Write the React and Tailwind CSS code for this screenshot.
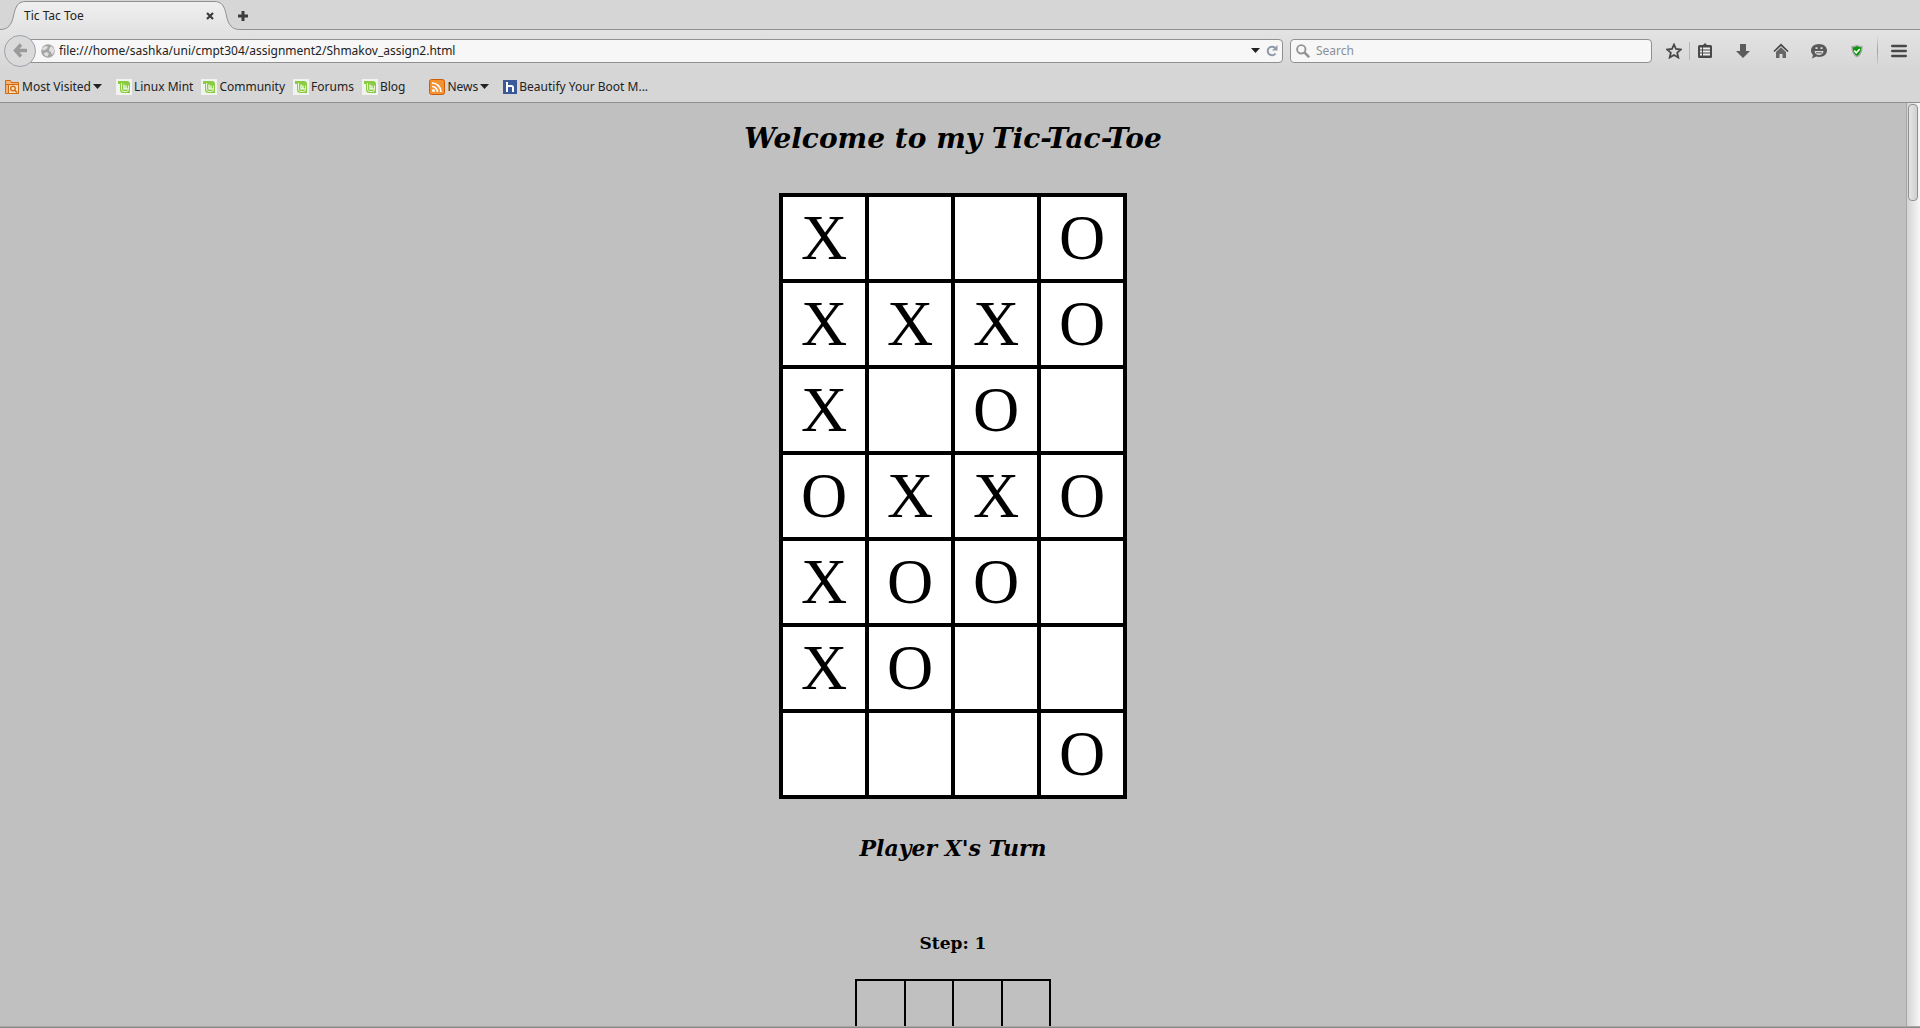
const board = [
  ["X", "", "", "O"],
  ["X", "X", "X", "O"],
  ["X", "", "O", ""],
  ["O", "X", "X", "O"],
  ["X", "O", "O", ""],
  ["X", "O", "", ""],
  ["", "", "", "O"],
];

const stepBoard = Array.from({ length: 7 }, () => ["", "", "", ""]);

function Caret() {
  return (
    <svg className="h-[5px] w-[9px]" viewBox="0 0 9 5" aria-hidden="true">
      <path d="M0 0h9L4.5 5z" fill="#222" />
    </svg>
  );
}

function FolderIcon() {
  return (
    <svg className="size-4" viewBox="0 0 16 16" fill="none" aria-hidden="true">
      <path d="M1.5 14.500V1.500h5l1 2h7v11z" fill="#f3b273" stroke="#cf6a12" />
      <path d="M1 5.500h14" stroke="#cf6a12" />
      <path d="M4.500 5.500H14.500V14.500H4.500z" fill="#fbdcb8" stroke="#cf6a12" />
      <circle cx="9" cy="9.500" r="2.300" fill="#fbdcb8" stroke="#cf6a12" strokeWidth="1.300" />
      <path d="M10.800 11.300l2.200 2.200" stroke="#cf6a12" strokeWidth="1.500" />
    </svg>
  );
}

function MintIcon() {
  return (
    <svg className="size-4" viewBox="0 0 16 16" fill="none" aria-hidden="true">
      <path d="M0 0h16v16H0z" fill="#f1f3ee" />
      <path d="M2 2h9a3 3 0 0 1 3 3v9H7.500A3.500 3.500 0 0 1 4 10.500V5H2z" fill="#8acb42" />
      <path d="M5.500 4v6a2.500 2.500 0 0 0 2.500 2.500h2.500a2 2 0 0 0 2-2V6.500" stroke="#e6f5d4" />
      <path d="M8 5.500v4.500h4M10 6.500V10" stroke="#fff" strokeWidth="1.200" />
    </svg>
  );
}

function FeedIcon() {
  return (
    <svg className="size-4" viewBox="0 0 16 16" fill="none" aria-hidden="true">
      <rect x=".5" y=".5" width="15" height="15" rx="2" fill="#f6912f" stroke="#cb5c08" />
      <circle cx="4.500" cy="11.500" r="1.500" fill="#fff" />
      <path d="M3 7.500a5.500 5.500 0 0 1 5.500 5.500M3 4a9 9 0 0 1 9 9" stroke="#fff" strokeWidth="1.700" />
    </svg>
  );
}

function HowtoIcon() {
  return (
    <svg className="size-[14px]" viewBox="0 0 14 14" fill="none" aria-hidden="true">
      <path d="M0 0h14v14H0z" fill="#3b5998" />
      <path d="M4 2v10M4 7.500q0-1.500 1.500-1.500h3Q10 6 10 7.500V12" stroke="#fff" strokeWidth="2" />
    </svg>
  );
}

const bookmarks = [
  { label: "Most Visited", Icon: FolderIcon, menu: true, space: "mr-3.5" },
  { label: "Linux Mint", Icon: MintIcon, space: "mr-2" },
  { label: "Community", Icon: MintIcon, space: "mr-2" },
  { label: "Forums", Icon: MintIcon, space: "mr-2" },
  { label: "Blog", Icon: MintIcon, space: "mr-6" },
  { label: "News", Icon: FeedIcon, menu: true, space: "mr-3.5" },
  { label: "Beautify Your Boot M...", Icon: HowtoIcon, space: "" },
];

function TabStrip() {
  return (
    <div className="flex h-[29px] items-end bg-[#d6d6d6]">
      <div className="relative h-[29px] w-[240px]">
        <svg className="absolute top-0 left-0 h-[30px] w-[240px]" viewBox="0 0 240 30" aria-hidden="true">
          <defs>
            <linearGradient id="tabFill" x1="0" y1="0" x2="0" y2="1">
              <stop offset="0" stopColor="#f0f0f0" />
              <stop offset="1" stopColor="#e3e3e3" />
            </linearGradient>
          </defs>
          <path
            d="M0 30V29.500C8 29.500 11.500 25 13.500 16C15.500 6 18 1.500 26 1.500H214C222 1.500 224.500 6 226.500 16C228.500 25 232 29.500 240 29.500V30z"
            fill="url(#tabFill)"
          />
          <path
            d="M0 29.500C8 29.500 11.500 25 13.500 16C15.500 6 18 1.500 26 1.500H214C222 1.500 224.500 6 226.500 16C228.500 25 232 29.500 240 29.500"
            fill="none"
            stroke="#909090"
          />
        </svg>
        <div className="relative flex h-[31px] items-center justify-between pr-[26px] pl-6">
          <span>Tic Tac Toe</span>
          <button type="button" aria-label="Close tab">
            <svg className="size-2" viewBox="0 0 8 8" aria-hidden="true">
              <path d="M1 1l6 6M7 1l-6 6" stroke="#3c3c3c" strokeWidth="2.200" />
            </svg>
          </button>
        </div>
      </div>
      <div className="flex h-[29px] flex-1 items-center pt-0.5 shadow-[0_1px_0_#909090]">
        <button type="button" aria-label="New tab" className="-ml-0.5">
          <svg className="size-[10px]" viewBox="0 0 10 10" aria-hidden="true">
            <path d="M3.500 0h3v3.500H10v3H6.500V10h-3V6.500H0v-3h3.500z" fill="#3c3c3c" />
          </svg>
        </button>
      </div>
    </div>
  );
}

function NavBar() {
  return (
    <div className="flex h-[41px] items-center bg-linear-to-b from-[#e3e3e3] to-[#d6d6d6] pr-4 pl-1">
      <button
        type="button"
        aria-label="Back"
        className="z-10 flex size-8 shrink-0 items-center justify-center rounded-full border border-[#9ba3ad] bg-[#dadada]"
      >
        <svg className="size-[15px]" viewBox="0 0 15 15" fill="none" aria-hidden="true">
          <path d="M8 1.500L2.500 7.500L8 13.500M2.500 7.500H14" stroke="#9a9a9a" strokeWidth="3.400" />
        </svg>
      </button>
      <form className="-ml-[6px] mr-[7px] flex h-6 flex-1 items-center rounded-r-sm border border-[#909090] bg-[#f7f7f7] pr-1 pl-2.5">
        <svg className="size-[14px] shrink-0" viewBox="0 0 14 14" aria-hidden="true">
          <circle cx="7" cy="7" r="6.800" fill="#a4a4a4" />
          <path d="M1 4.500l3-2.500 3 .5-1 2-2 1.500-2 .5zM8.500 4l2-2 2.500 3 .2 3-2 3-1.500-3-1.700-1zM2.500 9.500l3-1.500 2.500 1.500-1.500 3-2-.5z" fill="#dedede" />
        </svg>
        <input
          type="text"
          aria-label="Address"
          defaultValue="file:///home/sashka/uni/cmpt304/assignment2/Shmakov_assign2.html"
          className="ml-1 min-w-0 flex-1 bg-transparent outline-none"
        />
        <button type="button" aria-label="Show history" className="mr-1.5">
          <Caret />
        </button>
        <button type="button" aria-label="Reload">
          <svg className="size-3" viewBox="0 0 12 12" fill="none" aria-hidden="true">
            <path d="M9.500 8.500A4.300 4.300 0 1 1 9 2.800" stroke="#8e9aa8" strokeWidth="2" />
            <path d="M11.500 0v5.500H6z" fill="#8e9aa8" />
          </svg>
        </button>
      </form>
      <form className="flex h-6 w-[362px] items-center rounded-sm border border-[#909090] bg-[#f7f7f7] pl-[5px]">
        <svg className="size-[14px]" viewBox="0 0 14 14" fill="none" aria-hidden="true">
          <circle cx="5.300" cy="5.300" r="4.200" stroke="#949494" strokeWidth="1.900" />
          <path d="M8.500 8.500l4.700 4.700" stroke="#949494" strokeWidth="2.500" />
        </svg>
        <input
          type="text"
          aria-label="Search"
          placeholder="Search"
          className="ml-1.5 min-w-0 flex-1 bg-transparent outline-none placeholder:text-[#8a8f96]"
        />
      </form>
      <div className="ml-3.5 flex items-center text-[#484848]">
        <button type="button" aria-label="Bookmark this page">
          <svg className="size-4" viewBox="0 0 16 16" fill="none" aria-hidden="true">
            <path d="M8 1.500l2 4.500 4.800.5-3.600 3.200 1.100 4.800L8 12l-4.300 2.500 1.100-4.800L1.200 6.500 6 6z" stroke="currentColor" strokeWidth="1.800" />
          </svg>
        </button>
        <span className="mx-[7px] h-[18px] w-px bg-[#b5b5b5]" />
        <button type="button" aria-label="Show bookmarks" className="mr-[22px]">
          <svg className="size-4" viewBox="0 0 16 16" fill="none" aria-hidden="true">
            <path d="M5 3L8 0l3 3z" fill="currentColor" />
            <rect x="1" y="2" width="14" height="13" rx="1.500" fill="currentColor" />
            <path d="M3 5.500h2m1 0h7M3 8.500h2m1 0h7M3 11.500h2m1 0h7" stroke="#ececec" strokeWidth="2" />
          </svg>
        </button>
        <button type="button" aria-label="Downloads" className="mr-[22px]">
          <svg className="size-4" viewBox="0 0 16 16" aria-hidden="true">
            <path d="M5 1h6v7h4L8 15 1 8h4z" fill="#5c5c5c" />
          </svg>
        </button>
        <button type="button" aria-label="Home" className="mr-[22px]">
          <svg className="size-4" viewBox="0 0 16 16" fill="none" aria-hidden="true">
            <path d="M1 8.500L8 1.800l7 6.700" stroke="currentColor" strokeWidth="1.700" />
            <path d="M3 9l5-4.800L13 9v6H9.500v-4h-3v4H3z" fill="#666" />
          </svg>
        </button>
        <button type="button" aria-label="Chat" className="mr-[22px]">
          <svg className="size-4" viewBox="0 0 16 16" fill="none" aria-hidden="true">
            <path d="M8 1c4.600 0 8 2.800 8 6.500S12.600 14 8 14c-1 0-2-.1-2.800-.4L1 15.500l1-3.500C.8 10.800 0 9.300 0 7.500 0 3.800 3.400 1 8 1z" fill="#5a5a5a" />
            <path d="M4.500 5.200h2M9.500 5.200h2" stroke="#ddd" strokeWidth="1.800" />
            <path d="M3.500 8h9c-.3 2.500-2.200 4-4.500 4s-4.200-1.500-4.500-4z" fill="#ddd" />
            <path d="M5 9.800h6" stroke="#5a5a5a" />
          </svg>
        </button>
        <button type="button" aria-label="Site safety" className="mr-3">
          <svg className="size-4" viewBox="0 0 16 16" fill="none" aria-hidden="true">
            <path d="M8 2.500c1.500 1 3 1.200 5 1.200 0 5-1.500 8-5 10-3.500-2-5-5-5-10 2 0 3.500-.2 5-1.200z" fill="#0b960b" stroke="#a8a8a8" strokeWidth="1.400" />
            <path d="M5.300 7.500l2 2.200 3.500-3.700" stroke="#fff" strokeWidth="1.600" />
          </svg>
        </button>
        <span className="mr-[13px] h-8 w-px bg-linear-to-b from-transparent via-[#9aa0a6] to-transparent" />
        <button type="button" aria-label="Open menu" className="-mr-[3px]">
          <svg className="h-[14px] w-4" viewBox="0 0 16 14" fill="none" aria-hidden="true">
            <path d="M1.300 2h13.400M1.300 7h13.400M1.300 12h13.400" stroke="#484848" strokeWidth="2.600" strokeLinecap="round" />
          </svg>
        </button>
      </div>
    </div>
  );
}

function BookmarksBar() {
  return (
    <nav aria-label="Bookmarks" className="flex h-8 items-center border-b border-[#909090] bg-[#d6d6d6] pl-1">
      {bookmarks.map(({ label, Icon, menu, space }) => (
        <a key={label} href="#bookmark" className={space + " flex items-center gap-0.5 whitespace-nowrap"}>
          <Icon />
          <span>{label}</span>
          {menu && <Caret />}
        </a>
      ))}
    </nav>
  );
}

export default function App() {
  return (
    <div className="flex h-screen flex-col overflow-hidden bg-[#c0c0c0]">
      <header className="shrink-0 font-['Noto_Sans',sans-serif] text-[12px] leading-4 text-[#222]">
        <TabStrip />
        <div className="h-px" />
        <NavBar />
        <BookmarksBar />
      </header>
      <div className="flex min-h-0 flex-1">
        <main className="flex flex-1 flex-col items-center overflow-hidden font-['DejaVu_Serif',serif] font-bold text-black">
          <h1 className="mt-5 text-[28px] leading-8 italic">Welcome to my Tic-Tac-Toe</h1>
          <table className="mt-[38px] border-collapse font-['Liberation_Serif',serif] text-[64px] leading-none font-normal">
            <tbody>
              {board.map((row, r) => (
                <tr key={r}>
                  {row.map((mark, c) => (
                    <td key={c} className="h-[86px] w-[86px] min-w-[86px] border-4 border-black bg-white p-0 text-center">
                      {mark}
                    </td>
                  ))}
                </tr>
              ))}
            </tbody>
          </table>
          <h2 className="mt-[35px] text-[22px] leading-7 italic">Player X's Turn</h2>
          <h3 className="mt-[71px] text-[17px] leading-5">Step: 1</h3>
          <table className="mt-[26px] w-[196px] table-fixed border-collapse">
            <tbody>
              {stepBoard.map((row, r) => (
                <tr key={r}>
                  {row.map((mark, c) => (
                    <td key={c} className="h-12 border-2 border-black p-0 text-center">
                      {mark}
                    </td>
                  ))}
                </tr>
              ))}
            </tbody>
          </table>
        </main>
        <div className="w-[14px] shrink-0 border-l border-[#a8a8a8] bg-linear-to-r from-[#d4d4d4] to-[#f8f8f8] px-px pt-px">
          <div className="h-[97px] w-[10px] rounded border border-[#909090] bg-linear-to-r from-[#e6e6e6] to-[#cfcfcf]" />
        </div>
      </div>
      <div className="h-0.5 shrink-0 border-t border-[#a6a6a6] bg-[#8c898b]" />
    </div>
  );
}
